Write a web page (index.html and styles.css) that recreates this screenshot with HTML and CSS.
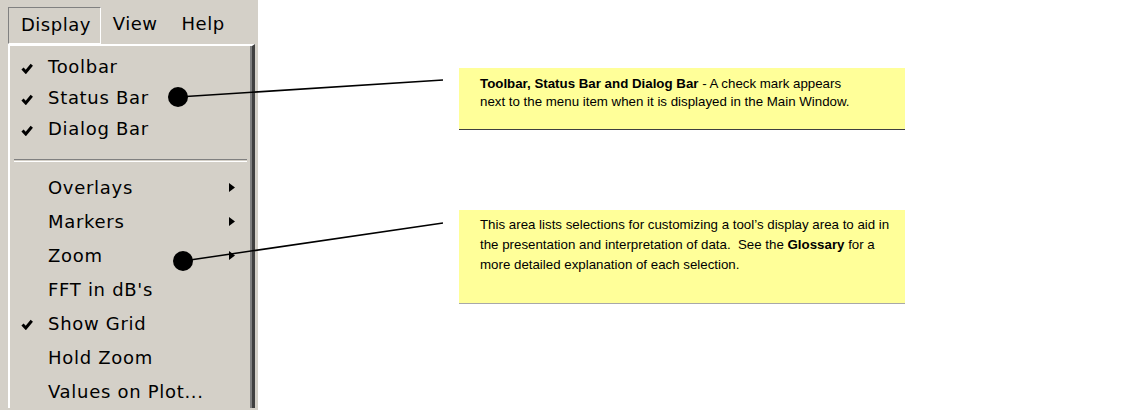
FILE: index.html
```html
<!DOCTYPE html>
<html>
<head>
<meta charset="utf-8" />
<title>Display menu</title>
<link rel="stylesheet" href="styles.css">
</head>
<body>
<div class="page">
	<div class="window">
		<div class="menubar">
			<span class="mitem open">Display</span>
			<span class="mitem">View</span>
			<span class="mitem help">Help</span>
		</div>
		<div class="dropdown">
			<div class="row top"><span class="chk"><svg width="12" height="11" viewBox="0 0 12 11"><polyline points="1.5,5.5 4.8,9 10.8,1.8" fill="none" stroke="#000" stroke-width="3" /></svg></span>Toolbar</div>
			<div class="row top"><span class="chk"><svg width="12" height="11" viewBox="0 0 12 11"><polyline points="1.5,5.5 4.8,9 10.8,1.8" fill="none" stroke="#000" stroke-width="3" /></svg></span>Status Bar</div>
			<div class="row top"><span class="chk"><svg width="12" height="11" viewBox="0 0 12 11"><polyline points="1.5,5.5 4.8,9 10.8,1.8" fill="none" stroke="#000" stroke-width="3" /></svg></span>Dialog Bar</div>
			<div class="sep"></div>
			<div class="row"><span class="chk"></span>Overlays<span class="sub"><svg width="7" height="9" viewBox="0 0 7 9"><polygon points="0,0 6,4.5 0,9" fill="#000" /></svg></span></div>
			<div class="row"><span class="chk"></span>Markers<span class="sub"><svg width="7" height="9" viewBox="0 0 7 9"><polygon points="0,0 6,4.5 0,9" fill="#000" /></svg></span></div>
			<div class="row"><span class="chk"></span>Zoom<span class="sub"><svg width="7" height="9" viewBox="0 0 7 9"><polygon points="0,0 6,4.5 0,9" fill="#000" /></svg></span></div>
			<div class="row"><span class="chk"></span>FFT in dB's</div>
			<div class="row"><span class="chk"><svg width="12" height="11" viewBox="0 0 12 11"><polyline points="1.5,5.5 4.8,9 10.8,1.8" fill="none" stroke="#000" stroke-width="3" /></svg></span>Show Grid</div>
			<div class="row"><span class="chk"></span>Hold Zoom</div>
			<div class="row"><span class="chk"></span>Values on Plot...</div>
		</div>
	</div>
	<div class="notes">
		<div class="note first">
			<b>Toolbar, Status Bar and Dialog Bar</b> - A check mark appears<br />
			next to the menu item when it is displayed in the Main Window.
		</div>
		<div class="note second">
			This area lists selections for customizing a tool’s display area to aid in<br />
			the presentation and interpretation of data.&nbsp; See the <b>Glossary</b> for a<br />
			more detailed explanation of each selection.
		</div>
	</div>
	<svg class="pointers" width="1145" height="410">
		<line x1="178" y1="97" x2="443" y2="80" stroke="#000" stroke-width="1.5" />
		<circle cx="178" cy="97" r="10" fill="#000" />
		<line x1="183" y1="261" x2="443" y2="223" stroke="#000" stroke-width="1.5" />
		<circle cx="183" cy="261" r="10" fill="#000" />
	</svg>
</div>
</body>
</html>
```
FILE: styles.css
```css
*{ margin:0; padding:0;}
body{ background:#fff; width:1145px; height:410px; overflow:hidden;}
.page{ position:relative; display:flex; width:1145px; height:410px;}

.window{ flex:none; width:258px; height:410px; background:#d4d0c8; font-family:"DejaVu Sans", sans-serif; font-size:18px; letter-spacing:0.7px; color:#000;}
.menubar{ display:flex; height:37px; padding-top:7px; padding-left:8px; letter-spacing:0.5px;}
.mitem{ height:35px; line-height:33px; padding:0 12px;}
.mitem.open{ border:1px solid; border-color:#808080 #fff #fff #808080; padding:0 9px 0 12px;}
.mitem.help{ padding-left:12px;}

.dropdown{ margin-left:8px; width:247px; height:364px; padding-top:5px; box-sizing:border-box; border-top:2px solid #fff; border-left:2px solid #fff; border-right:3px solid #404040; box-shadow:inset -2px 0 #808080;}
.row{ display:flex; align-items:center; height:34px; padding-right:16px;}
.row.top{ height:31px;}
.chk{ width:38px; flex:none; padding-left:11px; box-sizing:border-box; display:flex; align-items:center; padding-top:3px;}
.sub{ margin-left:auto; display:flex; padding-top:1px;}
.sep{ margin:15px 5px 8px 4px; height:1px; border-top:1px solid #808080; border-bottom:1px solid #fff;}

.notes{ margin-left:201px; padding-top:68px; display:flex; flex-direction:column; font-family:"Liberation Sans", Arial, sans-serif; font-size:13.3px; color:#000;}
.note{ width:446px; box-sizing:border-box; background:#ffff99; padding-left:21px; white-space:nowrap;}
.note.first{ height:62px; padding-top:7px; line-height:18px; border-bottom:1px solid #404040;}
.note.second{ height:94px; margin-top:80px; padding-top:5px; line-height:20px; border-bottom:1px solid #a8a8a8;}

.pointers{ position:absolute; left:0; top:0; pointer-events:none;}
```
